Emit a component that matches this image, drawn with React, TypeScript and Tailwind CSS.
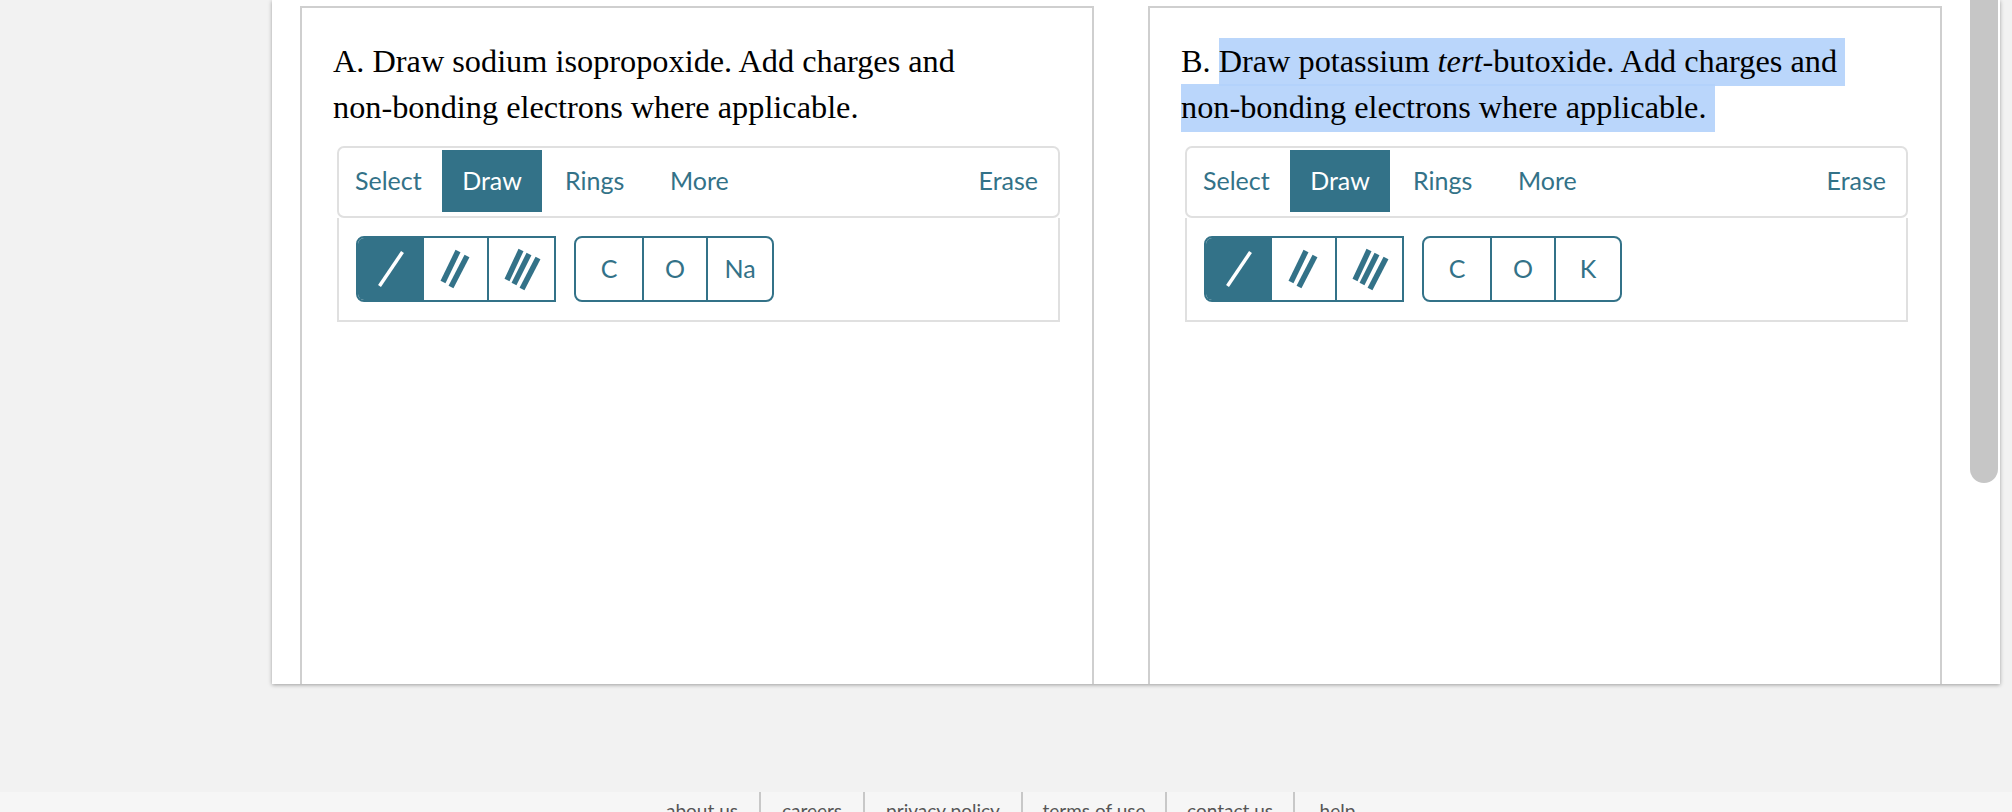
import type { ReactNode } from 'react';

const TABS = [
  { label: 'Select', width: 'w-[87px]' },
  { label: 'Draw', width: 'w-[100px]' },
  { label: 'Rings', width: 'ml-[23px] w-[105px]' },
  { label: 'More', width: 'w-[70px]' },
];
const FOOTER_LINKS = [
  { label: 'about us', width: 'w-[116px] border-r-2' },
  { label: 'careers', width: 'w-[104px] border-r-2' },
  { label: 'privacy policy', width: 'w-[158px] border-r-2' },
  { label: 'terms of use', width: 'w-[144px] border-r-2' },
  { label: 'contact us', width: 'w-[128px] border-r-2' },
  { label: 'help', width: 'w-[85px]' },
];
const ATOM_WIDTHS = ['w-[68px]', 'w-[64px]', 'w-[64px]'];

/* Bond glyphs, drawn on a 40x44 box in the middle of each cell. */
function BondIcon({ lines, stroke, width }: { lines: number[][]; stroke: string; width: number }) {
  return (
    <svg width="40" height="44" viewBox="0 0 40 44" fill="none" aria-hidden="true">
      {lines.map(([x1, y1, x2, y2]) => (
        <line key={`${x1}-${y1}`} x1={x1} y1={y1} x2={x2} y2={y2} stroke={stroke} strokeWidth={width} />
      ))}
    </svg>
  );
}

function BondButtons() {
  return (
    <div className="flex h-[66px] w-[200px] overflow-hidden rounded-l-[8px] border-2 border-[#337288] bg-white">
      <div className="flex w-[66px] items-center justify-center bg-[#337288]">
        <BondIcon stroke="#ffffff" width={3.5} lines={[[31.5, 5, 8.5, 39]]} />
      </div>
      <div className="flex w-[65px] items-center justify-center border-r-2 border-[#337288]">
        <BondIcon stroke="#337288" width={5.5} lines={[[22, 4, 7, 35], [31, 9, 15, 40]]} />
      </div>
      <div className="flex flex-1 items-center justify-center">
        <BondIcon stroke="#337288" width={5.5} lines={[[19, 3, 5, 33], [27, 7, 12, 37], [36, 11, 20, 42]]} />
      </div>
    </div>
  );
}

function AtomButtons({ atoms }: { atoms: string[] }) {
  return (
    <div className="flex h-[66px] overflow-hidden rounded-[8px] border-2 border-[#337288] bg-white">
      {atoms.map((atom, i) => (
        <div
          key={atom}
          className={`flex items-center justify-center text-[25px] text-[#337288] ${ATOM_WIDTHS[i]} ${
            i < atoms.length - 1 ? 'border-r-2 border-[#337288]' : ''
          }`}
        >
          {atom}
        </div>
      ))}
    </div>
  );
}

function Toolbar({ atoms }: { atoms: string[] }) {
  return (
    <div className="ml-[4px] w-[723px] font-['Lato',sans-serif]">
      <div className="flex h-[72px] items-start rounded-[7px] border-2 border-[#e0e0e0] pl-[16px] pr-[20px] pt-[2px]">
        {TABS.map((tab) => (
          <div
            key={tab.label}
            className={`flex h-[62px] items-center text-[25px] ${tab.width} ${
              tab.label === 'Draw' ? 'justify-center bg-[#337288] text-white' : 'text-[#337288]'
            }`}
          >
            {tab.label}
          </div>
        ))}
        <div className="ml-auto flex h-[62px] items-center text-[25px] text-[#337288]">Erase</div>
      </div>
      <div className="flex h-[104px] gap-[18px] border-2 border-t-0 border-[#e0e0e0] pl-[17px] pt-[18px]">
        <BondButtons />
        <AtomButtons atoms={atoms} />
      </div>
    </div>
  );
}

function ProblemCard({ children, atoms }: { children: ReactNode; atoms: string[] }) {
  return (
    <div className="w-[794px] border-2 border-b-0 border-[#cfcfcf] pl-[31px] pt-[30px]">
      <p className="mb-[16px] w-[670px] font-['Liberation_Serif',serif] text-[32.3px] leading-[46px] text-black">
        {children}
      </p>
      <Toolbar atoms={atoms} />
    </div>
  );
}

export default function App() {
  return (
    <div className="flex h-screen flex-col overflow-hidden bg-[#f2f2f2]">
      <main className="relative ml-[272px] mr-[12px] flex h-[684px] shrink-0 gap-[54px] bg-white pl-[28px] pt-[6px] shadow-[0_1px_4px_rgba(0,0,0,0.35)]">
        <ProblemCard atoms={['C', 'O', 'Na']}>A. Draw sodium isopropoxide. Add charges and non-bonding electrons where applicable.</ProblemCard>
        <ProblemCard atoms={['C', 'O', 'K']}>
          B.{' '}
          <span className="bg-[#b3d1fb]/90 pt-[5px] pb-[7px] pr-[8px] [box-decoration-break:clone]">
            Draw potassium <em>tert</em>-butoxide. Add charges and non-bonding electrons where applicable.
          </span>
        </ProblemCard>
        {/* overlay scrollbar thumb */}
        <div className="absolute right-[2px] top-0 h-[483px] w-[28px] rounded-b-[14px] bg-[#c6c6c6]" />
      </main>
      <footer className="mt-[108px] flex h-[60px] shrink-0 justify-center bg-[#f6f6f6] pl-[13px] font-['Lato',sans-serif]">
        {FOOTER_LINKS.map((link) => (
          <div
            key={link.label}
            className={`h-full border-[#c8c8c8] pt-[5px] text-center text-[19px] text-[#555555] ${link.width}`}
          >
            {link.label}
          </div>
        ))}
      </footer>
    </div>
  );
}
